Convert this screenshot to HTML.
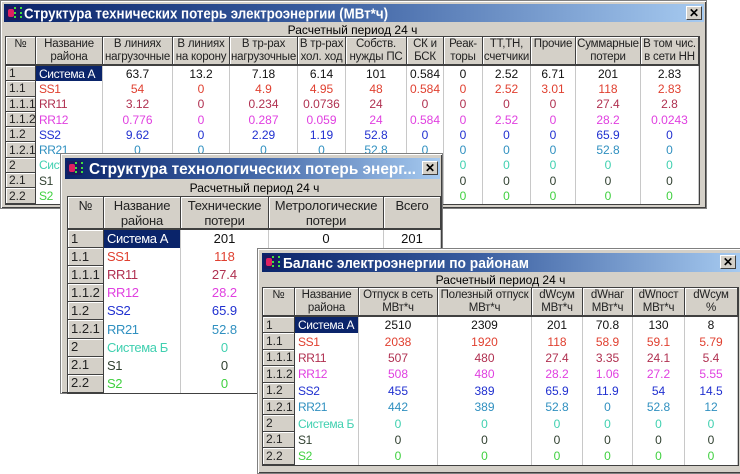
<!DOCTYPE html>
<html><head><meta charset="utf-8"><style>
*{box-sizing:border-box;margin:0;padding:0}
body{width:740px;height:468px;background:#fff;position:relative;overflow:hidden;font-family:"Liberation Sans",Arial,sans-serif}
.win{position:absolute;background:#d4d0c8;border:1px solid #808080;box-shadow:inset 1px 1px 0 #fff,inset -1px -1px 0 #404040}
.tb{position:absolute;background:linear-gradient(90deg,#0a246a 0%,#3a5ea0 45%,#a6caf0 100%);}
.tb svg{position:absolute;left:0;top:0}
.ic{position:absolute;width:15px;height:14px;top:2px;left:2px;background:#1a1a60}
.ic:before{content:"";position:absolute;left:2px;top:3px;width:6px;height:8px;background:#e02060;border-radius:2px}
.ic:after{content:"";position:absolute;left:8px;top:1px;width:4px;height:11px;border-left:2px dotted #40e040;border-right:2px dotted #40e040}
.cl{position:absolute;top:2px;width:16px;height:14px;background:#d4d0c8;border:1px solid;border-color:#fff #404040 #404040 #fff;font:bold 12px/12px "Liberation Sans",sans-serif;text-align:center;color:#000}
.sub{position:absolute;font-size:12px;text-align:center;color:#000}
table{position:absolute;border-collapse:separate;border-spacing:0;table-layout:fixed;font-size:12px;background:#fff;border:1px solid #404040}
th{background:#d4d0c8;font-weight:normal;font-size:11.5px;line-height:13px;color:#222;border-right:1px solid #404040;border-bottom:2px solid #404040;box-shadow:inset 1px 1px 0 #fff;vertical-align:top;padding-top:1px;white-space:nowrap;overflow:hidden;letter-spacing:-0.2px}
td{text-align:center;border-right:1px solid #c8c8c8;white-space:nowrap;overflow:hidden;padding:0;line-height:12px}
td.n{background:#d4d0c8;text-align:left;padding-left:3px;color:#222;border-right:1px solid #404040;border-bottom:1px solid #404040;box-shadow:inset 1px 1px 0 #fff;font-size:12px}
td.nm{text-align:left;padding-left:3px;letter-spacing:-0.4px}
td.sel{background:#0a246a;color:#fff}
.a{color:#111}.r{color:#e04030}.b{color:#b03050}.m{color:#e040e0}.u{color:#2030d0}.c{color:#3090c0}.t{color:#40d0b0}.g{color:#304030}.l{color:#40d040}
</style></head><body>

<div class="win" style="left:0;top:0;width:707px;height:209px">
 <div class="tb" style="left:3px;top:3px;width:700px;height:18px">
  <div class="ic"></div>
  <svg width="700" height="18"><text x="20" y="14.5" fill="#fff" font-family="Liberation Sans" font-weight="bold" font-size="15" textLength="364" lengthAdjust="spacingAndGlyphs">Структура технических потерь электроэнергии (МВт*ч)</text></svg>
  <div class="cl" style="left:682px">✕</div>
 </div>
 <div class="sub" style="left:5px;top:22px;width:693px">Расчетный период 24 ч</div>
 <table style="left:4px;top:35px;width:695px">
  <colgroup><col style="width:30px"><col style="width:67px"><col style="width:70px"><col style="width:57px"><col style="width:68px"><col style="width:48px"><col style="width:61px"><col style="width:37px"><col style="width:39px"><col style="width:48px"><col style="width:45px"><col style="width:65px"><col style="width:58px"></colgroup>
  <tr style="height:29px"><th>№</th><th>Название<br>района</th><th>В линиях<br>нагрузочные</th><th>В линиях<br>на корону</th><th>В тр-рах<br>нагрузочные</th><th>В тр-рах<br>хол. ход</th><th>Собств.<br>нужды ПС</th><th>СК и<br>БСК</th><th>Реак-<br>торы</th><th>ТТ,ТН,<br>счетчики</th><th>Прочие</th><th>Суммарные<br>потери</th><th>В том чис.<br>в сети НН</th></tr>
  <tr style="height:15.3px" class="a"><td class="n">1</td><td class="nm sel">Система А</td><td>63.7</td><td>13.2</td><td>7.18</td><td>6.14</td><td>101</td><td>0.584</td><td>0</td><td>2.52</td><td>6.71</td><td>201</td><td>2.83</td></tr>
  <tr style="height:15.3px" class="r"><td class="n">1.1</td><td class="nm">SS1</td><td>54</td><td>0</td><td>4.9</td><td>4.95</td><td>48</td><td>0.584</td><td>0</td><td>2.52</td><td>3.01</td><td>118</td><td>2.83</td></tr>
  <tr style="height:15.3px" class="b"><td class="n">1.1.1</td><td class="nm">RR11</td><td>3.12</td><td>0</td><td>0.234</td><td>0.0736</td><td>24</td><td>0</td><td>0</td><td>0</td><td>0</td><td>27.4</td><td>2.8</td></tr>
  <tr style="height:15.3px" class="m"><td class="n">1.1.2</td><td class="nm">RR12</td><td>0.776</td><td>0</td><td>0.287</td><td>0.059</td><td>24</td><td>0.584</td><td>0</td><td>2.52</td><td>0</td><td>28.2</td><td>0.0243</td></tr>
  <tr style="height:15.3px" class="u"><td class="n">1.2</td><td class="nm">SS2</td><td>9.62</td><td>0</td><td>2.29</td><td>1.19</td><td>52.8</td><td>0</td><td>0</td><td>0</td><td>0</td><td>65.9</td><td>0</td></tr>
  <tr style="height:15.3px" class="c"><td class="n">1.2.1</td><td class="nm">RR21</td><td>0</td><td>0</td><td>0</td><td>0</td><td>52.8</td><td>0</td><td>0</td><td>0</td><td>0</td><td>52.8</td><td>0</td></tr>
  <tr style="height:15.3px" class="t"><td class="n">2</td><td class="nm">Система Б</td><td>0</td><td>0</td><td>0</td><td>0</td><td>0</td><td>0</td><td>0</td><td>0</td><td>0</td><td>0</td><td>0</td></tr>
  <tr style="height:15.3px" class="g"><td class="n">2.1</td><td class="nm">S1</td><td>0</td><td>0</td><td>0</td><td>0</td><td>0</td><td>0</td><td>0</td><td>0</td><td>0</td><td>0</td><td>0</td></tr>
  <tr style="height:15.3px" class="l"><td class="n">2.2</td><td class="nm">S2</td><td>0</td><td>0</td><td>0</td><td>0</td><td>0</td><td>0</td><td>0</td><td>0</td><td>0</td><td>0</td><td>0</td></tr>
 </table>
</div>

<div class="win" style="left:60px;top:153px;width:383px;height:241px">
 <div class="tb" style="left:4px;top:4px;width:375px;height:21px">
  <div class="ic" style="top:3px"></div>
  <svg width="375" height="21"><text x="24" y="16" fill="#fff" font-family="Liberation Sans" font-weight="bold" font-size="16" textLength="327" lengthAdjust="spacingAndGlyphs">Структура технологических потерь энерг...</text></svg>
  <div class="cl" style="left:357px;top:3px">✕</div>
 </div>
 <div class="sub" style="left:7px;top:27px;width:373px">Расчетный период 24 ч</div>
 <table style="left:6px;top:42px;width:375px;font-size:13px">
  <colgroup><col style="width:36px"><col style="width:77px"><col style="width:88px"><col style="width:115px"><col style="width:57px"></colgroup>
  <tr style="height:32px"><th style="font-size:13px;line-height:15px">№</th><th style="font-size:13px;line-height:15px">Название<br>района</th><th style="font-size:13px;line-height:15px">Технические<br>потери</th><th style="font-size:13px;line-height:15px">Метрологические<br>потери</th><th style="font-size:13px;line-height:15px">Всего</th></tr>
  <tr style="height:18.1px" class="a"><td class="n" style="font-size:13px">1</td><td class="nm sel">Система А</td><td>201</td><td>0</td><td>201</td></tr>
  <tr style="height:18.1px" class="r"><td class="n" style="font-size:13px">1.1</td><td class="nm">SS1</td><td>118</td><td>0</td><td>118</td></tr>
  <tr style="height:18.1px" class="b"><td class="n" style="font-size:13px">1.1.1</td><td class="nm">RR11</td><td>27.4</td><td>0</td><td>27.4</td></tr>
  <tr style="height:18.1px" class="m"><td class="n" style="font-size:13px">1.1.2</td><td class="nm">RR12</td><td>28.2</td><td>0</td><td>28.2</td></tr>
  <tr style="height:18.1px" class="u"><td class="n" style="font-size:13px">1.2</td><td class="nm">SS2</td><td>65.9</td><td>0</td><td>65.9</td></tr>
  <tr style="height:18.1px" class="c"><td class="n" style="font-size:13px">1.2.1</td><td class="nm">RR21</td><td>52.8</td><td>0</td><td>52.8</td></tr>
  <tr style="height:18.1px" class="t"><td class="n" style="font-size:13px">2</td><td class="nm">Система Б</td><td>0</td><td>0</td><td>0</td></tr>
  <tr style="height:18.1px" class="g"><td class="n" style="font-size:13px">2.1</td><td class="nm">S1</td><td>0</td><td>0</td><td>0</td></tr>
  <tr style="height:18.1px" class="l"><td class="n" style="font-size:13px">2.2</td><td class="nm">S2</td><td>0</td><td>0</td><td>0</td></tr>
 </table>
</div>

<div class="win" style="left:257px;top:248px;width:490px;height:226px">
 <div class="tb" style="left:4px;top:4px;width:478px;height:19px">
  <div class="ic"></div>
  <svg width="478" height="19"><text x="21" y="15" fill="#fff" font-family="Liberation Sans" font-weight="bold" font-size="15" textLength="246" lengthAdjust="spacingAndGlyphs">Баланс электроэнергии по районам</text></svg>
  <div class="cl" style="left:458px">✕</div>
 </div>
 <div class="sub" style="left:5px;top:24px;width:475px">Расчетный период 24 ч</div>
 <table style="left:4px;top:38px;width:477px">
  <colgroup><col style="width:32px"><col style="width:64px"><col style="width:79px"><col style="width:94px"><col style="width:51px"><col style="width:50px"><col style="width:52px"><col style="width:53px"></colgroup>
  <tr style="height:28px"><th>№</th><th>Название<br>района</th><th>Отпуск в сеть<br>МВт*ч</th><th>Полезный отпуск<br>МВт*ч</th><th>dWсум<br>МВт*ч</th><th>dWнаг<br>МВт*ч</th><th>dWпост<br>МВт*ч</th><th>dWсум<br>%</th></tr>
  <tr style="height:16.4px" class="a"><td class="n">1</td><td class="nm sel">Система А</td><td>2510</td><td>2309</td><td>201</td><td>70.8</td><td>130</td><td>8</td></tr>
  <tr style="height:16.4px" class="r"><td class="n">1.1</td><td class="nm">SS1</td><td>2038</td><td>1920</td><td>118</td><td>58.9</td><td>59.1</td><td>5.79</td></tr>
  <tr style="height:16.4px" class="b"><td class="n">1.1.1</td><td class="nm">RR11</td><td>507</td><td>480</td><td>27.4</td><td>3.35</td><td>24.1</td><td>5.4</td></tr>
  <tr style="height:16.4px" class="m"><td class="n">1.1.2</td><td class="nm">RR12</td><td>508</td><td>480</td><td>28.2</td><td>1.06</td><td>27.2</td><td>5.55</td></tr>
  <tr style="height:16.4px" class="u"><td class="n">1.2</td><td class="nm">SS2</td><td>455</td><td>389</td><td>65.9</td><td>11.9</td><td>54</td><td>14.5</td></tr>
  <tr style="height:16.4px" class="c"><td class="n">1.2.1</td><td class="nm">RR21</td><td>442</td><td>389</td><td>52.8</td><td>0</td><td>52.8</td><td>12</td></tr>
  <tr style="height:16.4px" class="t"><td class="n">2</td><td class="nm">Система Б</td><td>0</td><td>0</td><td>0</td><td>0</td><td>0</td><td>0</td></tr>
  <tr style="height:16.4px" class="g"><td class="n">2.1</td><td class="nm">S1</td><td>0</td><td>0</td><td>0</td><td>0</td><td>0</td><td>0</td></tr>
  <tr style="height:16.4px" class="l"><td class="n">2.2</td><td class="nm">S2</td><td>0</td><td>0</td><td>0</td><td>0</td><td>0</td><td>0</td></tr>
 </table>
</div>
</body></html>
